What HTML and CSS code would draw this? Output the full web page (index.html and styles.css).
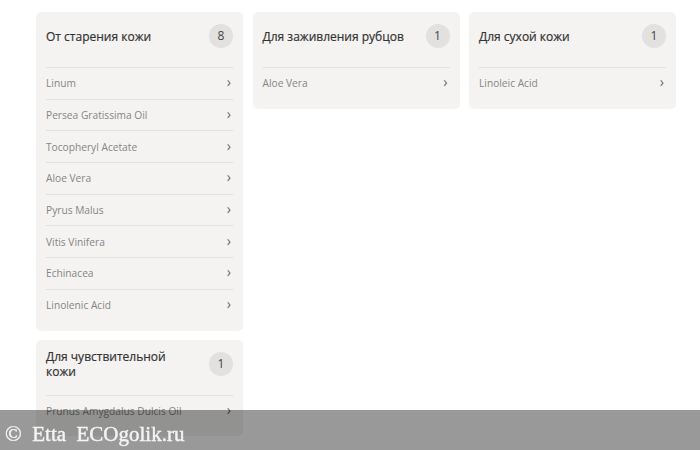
FILE: index.html
```html
<!DOCTYPE html>
<html lang="ru">
<head>
  <meta charset="UTF-8">
  <title>Компоненты</title>
  <link rel="stylesheet" href="styles.css">
</head>
<body>
  <div class="groups">
    <div class="group">
      <div class="group-head">
        <span class="group-title">От старения кожи</span>
        <span class="count">8</span>
      </div>
      <a class="item" href="#">Linum<span class="arrow">›</span></a>
      <a class="item" href="#">Persea Gratissima Oil<span class="arrow">›</span></a>
      <a class="item" href="#">Tocopheryl Acetate<span class="arrow">›</span></a>
      <a class="item" href="#">Aloe Vera<span class="arrow">›</span></a>
      <a class="item" href="#">Pyrus Malus<span class="arrow">›</span></a>
      <a class="item" href="#">Vitis Vinifera<span class="arrow">›</span></a>
      <a class="item" href="#">Echinacea<span class="arrow">›</span></a>
      <a class="item" href="#">Linolenic Acid<span class="arrow">›</span></a>
    </div>

    <div class="group">
      <div class="group-head">
        <span class="group-title">Для заживления рубцов</span>
        <span class="count">1</span>
      </div>
      <a class="item" href="#">Aloe Vera<span class="arrow">›</span></a>
    </div>

    <div class="group">
      <div class="group-head">
        <span class="group-title">Для сухой кожи</span>
        <span class="count">1</span>
      </div>
      <a class="item" href="#">Linoleic Acid<span class="arrow">›</span></a>
    </div>

    <div class="group">
      <div class="group-head">
        <span class="group-title">Для чувствительной кожи</span>
        <span class="count">1</span>
      </div>
      <a class="item" href="#">Prunus Amygdalus Dulcis Oil<span class="arrow">›</span></a>
    </div>
  </div>

  <div class="watermark"><span class="copy">©</span>&nbsp; Etta&nbsp; ECOgolik.ru</div>
</body>
</html>
```

FILE: styles.css
```css
body {
  margin: 0;
  background: #fff;
  font-family: 'Open Sans', 'Noto Sans', sans-serif;
  color: #333;
}

.groups {
  width: 640px;
  margin-left: 36px;
  padding-top: 12px;
  display: grid;
  grid-template-columns: repeat(3, 1fr);
  column-gap: 9.5px;
  row-gap: 9px;
  align-items: start;
}

.group {
  background: #f4f3f1;
  border-radius: 5px;
  padding: 0 10px 10px;
}

.group-head {
  display: flex;
  align-items: flex-start;
  height: 55px;
  box-sizing: border-box;
  padding-top: 9px;
}

.group-title {
  flex: 1;
  min-height: 30px;
  display: flex;
  align-items: center;
  font-size: 12px;
  font-weight: 500;
  line-height: 15px;
  color: #333;
  padding-right: 16px;
  -webkit-text-stroke: 0.2px #333;
}

.count {
  flex-shrink: 0;
  width: 24px;
  height: 24px;
  margin-top: 3px;
  border-radius: 50%;
  background: #e2e1df;
  font-size: 12px;
  line-height: 24px;
  text-align: center;
  color: #444;
}

.item {
  display: flex;
  justify-content: space-between;
  align-items: center;
  height: 30.7px;
  border-top: 1px solid #e2e1df;
  font-size: 10.2px;
  color: #858585;
  text-decoration: none;
}

.arrow {
  font-size: 14px;
  line-height: 1;
  color: #666;
  padding: 0 2px 2px 0;
}

.watermark {
  position: fixed;
  left: 0;
  right: 0;
  top: 410px;
  height: 40px;
  box-sizing: border-box;
  padding: 9px 0 0 5px;
  background: rgba(0, 0, 0, 0.4);
  color: #f4f4f4;
  font-family: 'Liberation Serif', serif;
  font-size: 21px;
  line-height: 30px;
  -webkit-text-stroke: 0.4px #f4f4f4;
}

.copy {
  font-size: 22px;
}
```
